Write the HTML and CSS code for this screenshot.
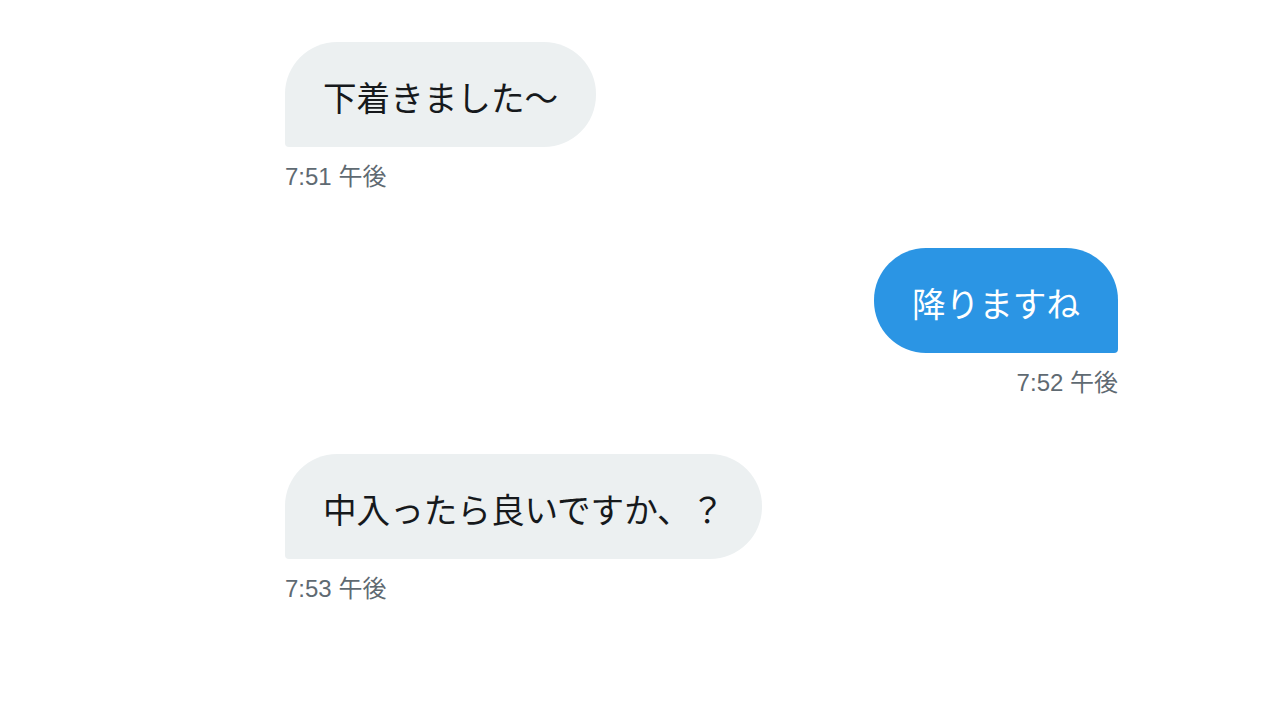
FILE: index.html
```html
<!doctype html>
<html lang="ja">
    <head>
        <meta charset="UTF-8" />
        <meta name="viewport" content="width=device-width, initial-scale=1.0" />
        <title>メッセージ</title>
        <link rel="stylesheet" href="styles.css">
    </head>
    <body>
        <div class="thread">
            <div class="message received">
                <div class="bubble">下着きました〜</div>
                <div class="time">7:51 午後</div>
            </div>

            <div class="message sent">
                <div class="bubble">降りますね</div>
                <div class="time">7:52 午後</div>
            </div>

            <div class="message received">
                <div class="bubble">中入ったら良いですか、？</div>
                <div class="time">7:53 午後</div>
            </div>
        </div>
    </body>
</html>
```

FILE: styles.css
```css
body {
    font-family: "Liberation Sans", "Noto Sans CJK JP", sans-serif;
    background-color: #ffffff;
    color: #16191c;
    margin: 0;
    padding: 42px 0 0 285px;
}
.thread {
    width: 833px;
    display: flex;
    flex-direction: column;
}
.message {
    display: flex;
    flex-direction: column;
    margin-bottom: 56px;
}
.message.received {
    align-items: flex-start;
}
.message.sent {
    align-items: flex-end;
}
.bubble {
    font-family: "Noto Sans CJK JP", sans-serif;
    font-size: 33.6px;
    line-height: 45px;
    padding: 32px 38px 28px;
    border-radius: 52px;
}
.received .bubble {
    background-color: #ecf0f1;
    border-bottom-left-radius: 4px;
}
.sent .bubble {
    background-color: #2b95e4;
    color: #ffffff;
    border-bottom-right-radius: 4px;
}
.time {
    margin-top: 15px;
    font-size: 24px;
    line-height: 30px;
    color: #5f6a72;
}
```
